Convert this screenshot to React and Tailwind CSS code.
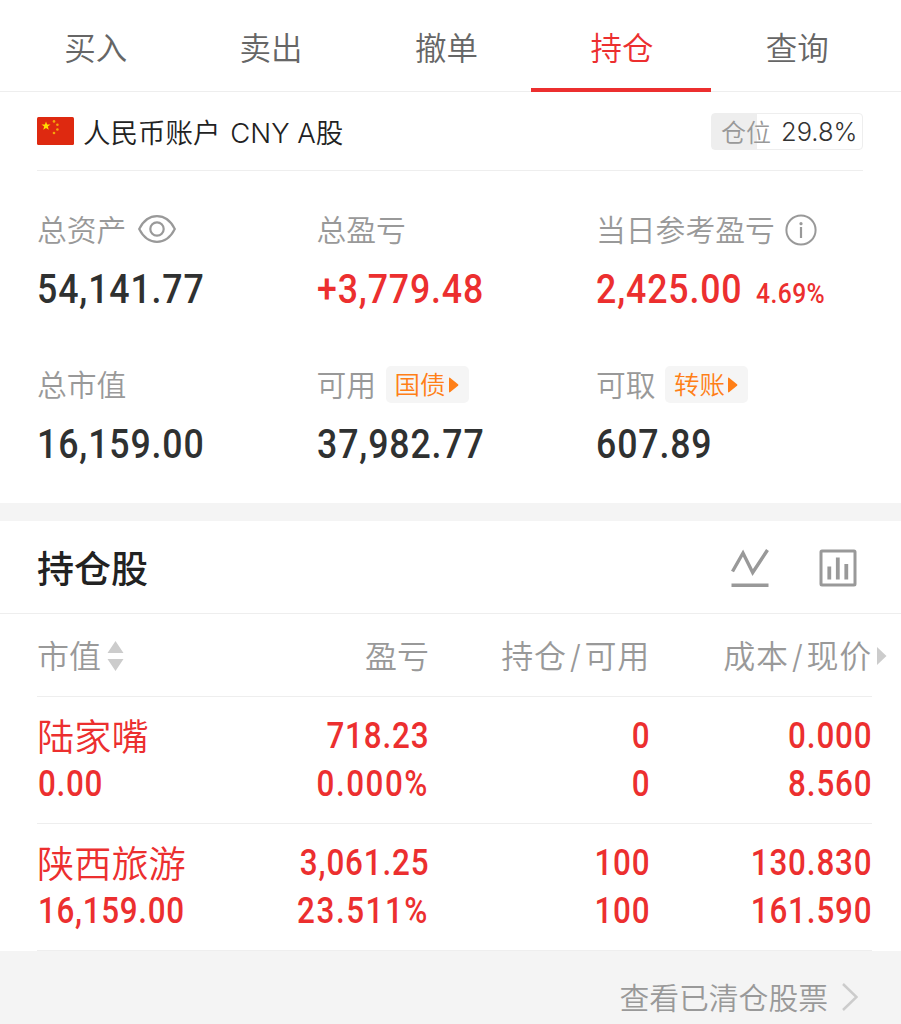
const tabs = ['买入', '卖出', '撤单', '持仓', '查询']

const holdings = [
  { name: '陆家嘴', value: '0.00', profit: '718.23', rate: '0.000%', amount: '0', usable: '0', cost: '0.000', price: '8.560' },
  { name: '陕西旅游', value: '16,159.00', profit: '3,061.25', rate: '23.511%', amount: '100', usable: '100', cost: '130.830', price: '161.590' },
]

function Flag() {
  return (
    <svg width="37" height="28" viewBox="0 0 37 28" className="shrink-0">
      <rect width="37" height="28" rx="1.5" fill="#de2910" />
      <path d="M9 4.5l1.1 3.1h3.4l-2.7 2 1 3.2L9 10.9l-2.8 1.9 1-3.2-2.7-2h3.4z" fill="#ffde00" />
      <g fill="#f5a50a">
        <circle cx="17" cy="4.4" r="1.3" />
        <circle cx="20.4" cy="7.8" r="1.3" />
        <circle cx="20.4" cy="12.5" r="1.3" />
        <circle cx="17" cy="16" r="1.3" />
      </g>
    </svg>
  )
}

function EyeIcon() {
  return (
    <svg width="38" height="28" viewBox="0 0 38 28" fill="none" stroke="#999" strokeWidth="2.2">
      <path d="M1.2 14C5.5 5.5 11.5 1.2 19 1.2S32.5 5.5 36.8 14C32.5 22.5 26.5 26.8 19 26.8S5.5 22.5 1.2 14z" />
      <circle cx="19" cy="14" r="6.7" />
    </svg>
  )
}

function InfoIcon() {
  return (
    <svg width="32" height="32" viewBox="0 0 32 32" fill="none" stroke="#999" strokeWidth="2">
      <circle cx="16" cy="16" r="14.6" />
      <path d="M16 13v11" strokeWidth="2.2" />
      <circle cx="16" cy="9.7" r="1.6" fill="#999" stroke="none" />
    </svg>
  )
}

function TrendIcon() {
  return (
    <svg width="38" height="38" viewBox="0 0 38 38" fill="none" stroke="#999" strokeWidth="3.4">
      <path d="M1.5 22.5L12 4l9.7 19.5L36.5 1" />
      <path d="M.5 36.2h37" />
    </svg>
  )
}

function BarsIcon() {
  return (
    <svg width="38" height="38" viewBox="0 0 38 38" fill="none" stroke="#999" strokeWidth="3">
      <rect x="2" y="2" width="34" height="34" rx="1" />
      <path d="M10.3 17.500v13M18.800 8.500v22M27.300 15v15.500" strokeWidth="3.800" />
    </svg>
  )
}

function Arrow() {
  return (
    <svg width="10" height="16" viewBox="0 0 10 16" fill="#ff7f17">
      <path d="M0 1.5Q0 0 1.3.9L9 7.2q.9.8 0 1.6L1.3 15.1Q0 16 0 14.5z" />
    </svg>
  )
}

function Tag({ children }) {
  return (
    <button className="ml-[9.5px] flex h-[37px] w-[83px] items-center gap-[3px] rounded-[5px] bg-[#f5f5f5] pl-[9px] text-[25.5px] text-[#ff7f17]">
      <span className="w-[51px] whitespace-nowrap pt-[2px]">{children}</span>
      <Arrow />
    </button>
  )
}

function Stat({ label, extra, value, note, red }) {
  return (
    <div className="h-[155px]">
      <div className="flex h-[37px] items-center whitespace-nowrap text-[29.8px] text-[#999]">
        <span className="pt-[2px]">{label}</span>
        {extra}
      </div>
      <div className={`mt-[16px] flex h-[50px] items-baseline whitespace-nowrap font-[Roboto] font-medium leading-[50px] ${red ? 'text-[#ec2f2f]' : 'text-[#2f3131]'}`}>
        <span className="origin-left scale-x-[.87] text-[41px] tracking-[1px]">{value}</span>
        {note && <span className="-ml-[8px] origin-left scale-x-[.88] text-[28px] tracking-[0.5px]">{note}</span>}
      </div>
    </div>
  )
}

function Num({ children }) {
  const percent = children.endsWith('%')
  return (
    <div className={`h-[48px] origin-right scale-x-[.86] text-[36.5px] ${percent ? 'tracking-[1.8px]' : 'translate-x-[0.5px] tracking-[1px]'}`}>
      {children}
    </div>
  )
}

function HoldingRow({ item }) {
  return (
    <div className="ml-[37px] mr-[29px] grid h-[127px] grid-cols-[171px_221px_221px_222px] border-b border-[#eee] pt-[15px] text-right font-[Roboto] font-medium leading-[48px] text-[#ec2f2f]">
      <div className="whitespace-nowrap text-left">
        <div className="-mt-px h-[49px] font-['Noto_Sans_CJK_SC',sans-serif] text-[37.2px] font-[350]">{item.name}</div>
        <div className="h-[48px] origin-left translate-x-px scale-x-[.86] text-[36.5px] tracking-[0.8px]">{item.value}</div>
      </div>
      <div>
        <Num>{item.profit}</Num>
        <Num>{item.rate}</Num>
      </div>
      <div>
        <Num>{item.amount}</Num>
        <Num>{item.usable}</Num>
      </div>
      <div>
        <Num>{item.cost}</Num>
        <Num>{item.price}</Num>
      </div>
    </div>
  )
}

export default function App() {
  return (
    <div className="h-[1024px] w-[901px] overflow-hidden bg-white font-['Inter','Noto_Sans_CJK_SC',sans-serif] font-[350]">
      <nav className="flex h-[92px] border-b border-[#eee] pl-[8px] pr-[16px]">
        {tabs.map(t => (
          <div key={t} className={`relative flex flex-1 items-center justify-center pt-[7px] text-[31.5px] ${t === '持仓' ? 'text-[#ec2f2f]' : 'text-[#666]'}`}>
            {t}
            {t === '持仓' && <div className="absolute -bottom-px -left-[3px] h-[4px] w-[180px] bg-[#ec2f2f]" />}
          </div>
        ))}
      </nav>

      <header className="ml-[37px] mr-[38px] flex h-[79px] items-center border-b border-[#eee] text-[#222]">
        <Flag />
        <span className="ml-[9px] pt-[5px] text-[27.5px]">
          人民币账户<span className="ml-[2px]"> CNY A</span>股
        </span>
        <div className="ml-auto flex h-[37px] w-[152px] items-center rounded-[4px] border border-[#eee] bg-[linear-gradient(to_right,#eee_45px,#fff_45px)] pl-[9px] text-[25px]">
          <span className="pt-[5px] text-[#999]">仓位</span>
          <span className="ml-[10px] pt-[2px] text-[25.5px] text-[#333]">29.8%</span>
        </div>
      </header>

      <section className="grid h-[332px] grid-cols-[279.5px_279.5px_1fr] pl-[37px] pt-[40px]">
        <Stat label="总资产" value="54,141.77" extra={<span className="ml-[12px] -mt-[1px]"><EyeIcon /></span>} />
        <Stat label="总盈亏" value="+3,779.48" red />
        <Stat label="当日参考盈亏" value="2,425.00" note="4.69%" red extra={<span className="ml-[10px]"><InfoIcon /></span>} />
        <Stat label="总市值" value="16,159.00" />
        <Stat label="可用" value="37,982.77" extra={<Tag>国债</Tag>} />
        <Stat label="可取" value="607.89" extra={<Tag>转账</Tag>} />
      </section>

      <div className="h-[18px] bg-[#f4f4f4]" />

      <div className="flex h-[93px] items-center border-b border-[#eee] pl-[37px] pr-[44px]">
        <h2 className="pt-[5px] text-[37px] font-medium text-[#222]">持仓股</h2>
        <div className="ml-auto flex gap-[50px] pt-px">
          <TrendIcon />
          <BarsIcon />
        </div>
      </div>

      <div className="ml-[37px] mr-[29px] grid h-[83px] grid-cols-[171px_221px_221px_222px] items-center border-b border-[#eee] text-right text-[32px] text-[#999]">
        <div className="flex items-center text-left">
          <span className="pt-[4px]">市值</span>
          <svg width="17" height="30" viewBox="0 0 17 30" fill="#ccc" className="ml-[6px] mt-[2px]">
            <path d="M8.5 0l8 12H.5zM.5 18h16l-8 12z" />
          </svg>
        </div>
        <div className="pt-[4px]">盈亏</div>
        <div className="pt-[4px] tracking-[.7px]">
          持仓<span className="mx-[3px]">/</span>可用
        </div>
        <div className="relative pt-[4px] tracking-[.7px]">
          成本<span className="mx-[3px]">/</span>现价
          <svg width="10" height="18" viewBox="0 0 10 18" fill="#ccc" className="absolute -right-[15px] top-[18px]">
            <path d="M0 0l9.5 9L0 18z" />
          </svg>
        </div>
      </div>

      {holdings.map(h => <HoldingRow key={h.name} item={h} />)}

      <footer className="flex h-[74px] items-center justify-end bg-[#f4f4f4] pr-[43px] pt-[18px] text-[29.8px] text-[#999]">
        <span className="pt-[2px]">查看已清仓股票</span>
        <svg width="16" height="28" viewBox="0 0 16 28" fill="none" stroke="#ccc" strokeWidth="2.5" className="ml-[14px]">
          <path d="M1 1l13.5 13L1 27" />
        </svg>
      </footer>
    </div>
  )
}
